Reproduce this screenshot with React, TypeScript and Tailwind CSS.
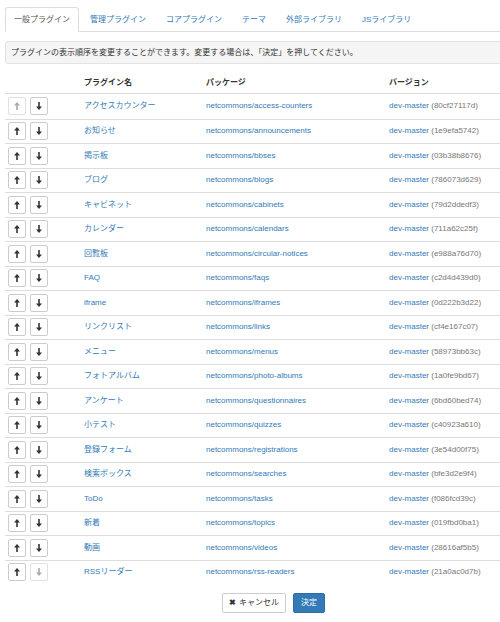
import React from "react";

const rows: [string, string, string][] = [
  ["アクセスカウンター", "access-counters", "80cf27117d"],
  ["お知らせ", "announcements", "1e9efa5742"],
  ["掲示板", "bbses", "03b38b8676"],
  ["ブログ", "blogs", "786073d629"],
  ["キャビネット", "cabinets", "79d2ddedf3"],
  ["カレンダー", "calendars", "711a62c25f"],
  ["回覧板", "circular-notices", "e988a76d70"],
  ["FAQ", "faqs", "c2d4d439d0"],
  ["iframe", "iframes", "0d222b3d22"],
  ["リンクリスト", "links", "cf4e167c07"],
  ["メニュー", "menus", "58973bb63c"],
  ["フォトアルバム", "photo-albums", "1a0fe9bd67"],
  ["アンケート", "questionnaires", "6bd60bed74"],
  ["小テスト", "quizzes", "c40923a610"],
  ["登録フォーム", "registrations", "3e54d00f75"],
  ["検索ボックス", "searches", "bfe3d2e9f4"],
  ["ToDo", "tasks", "f086fcd39c"],
  ["新着", "topics", "019fbd0ba1"],
  ["動画", "videos", "28616af5b5"],
  ["RSSリーダー", "rss-readers", "21a0ac0d7b"],
];

const tabs = ["一般プラグイン", "管理プラグイン", "コアプラグイン", "テーマ", "外部ライブラリ", "JSライブラリ"];

function Arrow({ up }: { up: boolean }) {
  return (
    <svg width="6" height="8" viewBox="0 0 6 8" className={up ? "" : "rotate-180"}>
      <path d="M3 0 L6 3.4 L3.8 3.4 L3.8 8 L2.2 8 L2.2 3.4 L0 3.4 Z" fill="currentColor" />
    </svg>
  );
}

function ArrowBtn({ up, disabled }: { up: boolean; disabled: boolean }) {
  return (
    <button
      className={
        "flex h-[18px] w-[18px] items-center justify-center rounded-[2px] border bg-white " +
        (disabled ? "border-[#e0e0e0] text-[#aaa]" : "border-[#ccc] text-[#333]")
      }
    >
      <Arrow up={up} />
    </button>
  );
}

export default function App() {
  return (
    <div
      className="w-[500px] overflow-hidden bg-white text-[8px] text-[#333]"
      style={{ fontFamily: '"Liberation Sans", "Noto Sans CJK JP", sans-serif' }}
    >
      <div className="w-[542px] pl-[5px]">
        {/* tabs */}
        <div className="mt-[7px] flex border-b border-[#ddd]">
          {tabs.map((t, i) => (
            <div
              key={t}
              className={
                "mr-[2px] -mb-px flex h-[25px] items-center rounded-t-[3px] border px-[8px] " +
                (i === 0
                  ? "border-[#ddd] border-b-white bg-white text-[#555]"
                  : "border-transparent text-[#337ab7]")
              }
            >
              {t}
            </div>
          ))}
        </div>

        {/* alert */}
        <div className="mt-[9px] flex h-[23px] items-center rounded-[3px] border border-[#e3e3e3] bg-[#f5f5f5] pl-[5px] text-[#333]">
          プラグインの表示順序を変更することができます。変更する場合は、「決定」を押してください。
        </div>

        {/* header */}
        <div className="mt-[9px] grid h-[21px] grid-cols-[76px_122px_183px_1fr] items-center border-b border-[#ddd] font-bold text-[#333]">
          <div />
          <div className="pl-[3px]">プラグイン名</div>
          <div className="pl-[3px]">パッケージ</div>
          <div className="pl-[3px]">バージョン</div>
        </div>

        {rows.map(([name, pkg, hash], i) => (
          <div
            key={pkg}
            className={
              "grid h-[24.5px] grid-cols-[76px_122px_183px_1fr] items-center " +
              (i > 0 ? "border-t border-[#ddd]" : "")
            }
          >
            <div className="flex gap-[4px] pl-[3px]">
              <ArrowBtn up disabled={i === 0} />
              <ArrowBtn up={false} disabled={i === rows.length - 1} />
            </div>
            <div className="pl-[3px] text-[#337ab7]">{name}</div>
            <div className="pl-[3px] text-[#337ab7]">netcommons/{pkg}</div>
            <div className="pl-[3px]">
              <span className="text-[#337ab7]">dev-master</span>{" "}
              <span className="text-[#777]">({hash})</span>
            </div>
          </div>
        ))}

        {/* footer */}
        <div className="mt-[9px] flex justify-center gap-[7px]">
          <button className="flex h-[20px] items-center gap-[3px] rounded-[2px] border border-[#ccc] bg-white px-[6px] text-[#333]">
            <span className="text-[8px] font-bold leading-none">✖</span>
            <span>キャンセル</span>
          </button>
          <button className="flex h-[20px] items-center rounded-[2px] border border-[#2e6da4] bg-[#337ab7] px-[7px] text-white">
            決定
          </button>
        </div>
      </div>
    </div>
  );
}
